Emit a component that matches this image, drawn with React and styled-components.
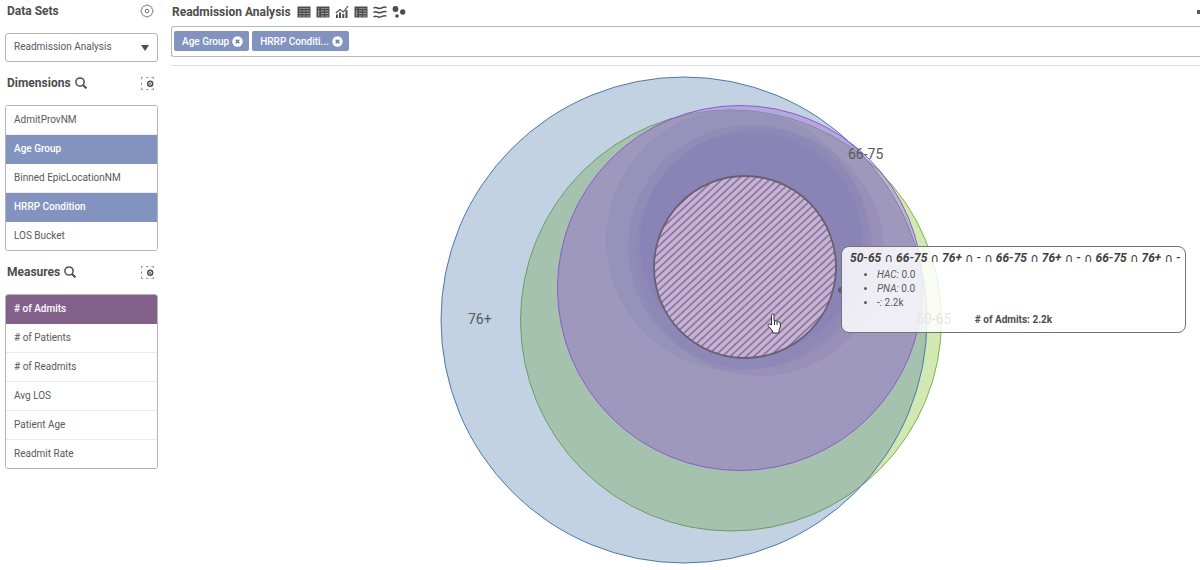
import React, { useState } from "react";
import styled, { createGlobalStyle } from "styled-components";

const GlobalStyle = createGlobalStyle`
  * {
    box-sizing: border-box;
  }

  body {
    margin: 0;
    background: #fff;
    color: #595959;
    font-family: Roboto, "Liberation Sans", sans-serif;
    font-size: 10px;
  }

  button, select {
    font: inherit;
    color: inherit;
  }
`;

const Page = styled.div`
  display: flex;
  overflow: hidden;
`;

const Sidebar = styled.aside`
  flex: 0 0 171px;
  display: flex;
  flex-direction: column;
  gap: 10px;
  padding: 0 13px 0 5px;
`;

const Section = styled.section`
  display: flex;
  flex-direction: column;
  gap: 9px;
`;

const SectionHead = styled.header`
  display: flex;
  align-items: center;
  gap: 4px;
  height: 24px;
  padding: 0 4px 2px 2px;
`;

const Title = styled.h2`
  margin: 0;
  font-size: 12px;
  line-height: 16px;
  font-weight: 700;
  color: #4d4d4d;
  white-space: nowrap;
`;

const IconButton = styled.button`
  display: flex;
  padding: 0;
  margin-left: ${props => (props.$end ? "auto" : "0")};
  border: 0;
  background: none;
  color: #595959;
  cursor: pointer;
`;

const SelectWrap = styled.label`
  display: flex;
  align-items: center;
  height: 29px;
  border: 1px solid #b3b3b3;
  border-radius: 3px;
  padding-right: 8px;
`;

const Select = styled.select`
  flex: 1;
  min-width: 0;
  height: 100%;
  padding: 0 8px 2px;
  border: 0;
  background: none;
  appearance: none;
`;

const List = styled.ul`
  margin: 0;
  padding: 0;
  list-style: none;
  border: 1px solid #b3b3b3;
  border-radius: 3px;
  overflow: hidden;
`;

const Item = styled.li`
  border-bottom: 1px solid ${props => (props.$active ? props.$color : "#ebebeb")};
  background: ${props => (props.$active ? props.$color : "#fff")};
  color: ${props => (props.$active ? "#fff" : "#595959")};
  font-weight: ${props => (props.$active ? 500 : 400)};

  &:last-child {
    border-bottom: 0;
  }
`;

const ItemButton = styled.button`
  display: block;
  width: 100%;
  height: 28px;
  padding: 0 8px 2px;
  border: 0;
  background: none;
  text-align: left;
  cursor: pointer;
`;

const Main = styled.main`
  flex: 1;
  min-width: 0;
`;

const Toolbar = styled.header`
  display: flex;
  align-items: center;
  gap: 6px;
  height: 24px;
  padding-left: 1px;
`;

const ChartTypes = styled.div`
  display: flex;
  align-items: center;
  gap: 5px;
`;

const FilterBar = styled.div`
  display: flex;
  align-items: center;
  gap: 3px;
  height: 31px;
  margin-top: 2px;
  padding: 0 2px 1px;
  border: 1px solid #b8b8b8;
  border-right: 0;
  border-radius: 3px 0 0 3px;
`;

const Chip = styled.span`
  display: flex;
  align-items: center;
  gap: 3px;
  height: 20px;
  padding: 0 6px 0 8px;
  border-radius: 2px;
  background: #8393c0;
  color: #fff;
  font-weight: 500;
  white-space: nowrap;
`;

const Chart = styled.div`
  position: relative;
  margin-top: 8px;
  border-top: 1px solid #dcdcdc;
`;

const Venn = styled.svg`
  display: block;
  width: 100%;
  height: auto;
`;

const SetLabel = styled.text`
  font-family: Roboto, sans-serif;
  font-size: 14px;
  fill: #595959;
`;

const Tooltip = styled.div`
  position: absolute;
  left: 670px;
  top: 180px;
  width: 345px;
  padding: 3px 8px 5px;
  border: 1px solid #737373;
  border-radius: 8px;
  background: rgba(255, 255, 255, 0.84);
  font-variant-numeric: slashed-zero;
`;

const TooltipTitle = styled.div`
  font-size: 12px;
  line-height: 16px;
  font-weight: 700;
  font-style: italic;
  color: #404040;
  white-space: nowrap;
`;

const Cap = styled.span`
  font-family: "DejaVu Sans", sans-serif;
  font-size: 12px;
  line-height: 12px;
  font-weight: 400;
  font-style: normal;
`;

const TooltipList = styled.ul`
  margin: 2px 0 3px;
  padding-left: 27px;
  line-height: 14px;
`;

const TooltipTotal = styled.div`
  text-align: center;
  line-height: 14px;
  font-weight: 700;
  color: #4d4d4d;
`;

const GearIcon = () => (
  <svg width="14" height="14" viewBox="0 0 14 14" fill="none" stroke="#737373">
    <path d="M11.9 9.03A2.4 2.4 0 0 1 9.03 11.9 2.4 2.4 0 0 1 4.97 11.9 2.4 2.4 0 0 1 2.1 9.03 2.4 2.4 0 0 1 2.1 4.97 2.4 2.4 0 0 1 4.97 2.1 2.4 2.4 0 0 1 9.03 2.1 2.4 2.4 0 0 1 11.9 4.97 2.4 2.4 0 0 1 11.9 9.03z" />
    <circle cx="7" cy="7" r="1.8" />
  </svg>
);

const SearchIcon = () => (
  <svg width="12" height="12" viewBox="0 0 12 12" fill="none" stroke="#4d4d4d">
    <circle cx="5" cy="5" r="4.1" strokeWidth="1.5" />
    <path d="M8 8l3.4 3.4" strokeWidth="2" />
  </svg>
);

const ClearIcon = () => (
  <svg width="13" height="13" viewBox="0 0 13 13" fill="none">
    <path
      d="M.5 2.5V.5H2M5 .5h2.5M10.5.5h2V2M.5 5.5V8M.5 10.5v2H2M5 12.5h2.500M10.500 12.5h2V11"
      stroke="#999"
    />
    <circle cx="9.2" cy="6.7" r="2.500" stroke="#4d4d4d" strokeWidth="1.4" />
    <path d="M8.2 5.7l2 2M10.2 5.7l-2 2" stroke="#4d4d4d" />
  </svg>
);

const ArrowIcon = () => (
  <svg width="8" height="6" viewBox="0 0 8 6">
    <path d="M0 0h8L4 6z" fill="#4d4d4d" />
  </svg>
);

const TableIcon = ({ pivot }) => (
  <svg width="14" height="12" viewBox="0 0 14 12">
    <path d="M.5.5h13v11H.5z" fill="#4d4d4d" />
    <path d={pivot ? "M2 2.5h1.5M5 2.5h7.5" : "M2 2.5h10.5"} stroke="#7d8a90" />
    <path
      d={pivot ? "M5 5h7.5M5 7.5h7.5M5 10h7.5M2.7 4v6.5" : "M2 5h10.5M2 7.5h10.5M2 10h10.5"}
      stroke="#a9b4b8"
      strokeWidth="0.9"
    />
    <path d={pivot ? "M8.5 4v7" : "M5 4v7M9 4v7"} stroke="#4d4d4d" />
  </svg>
);

const ComboIcon = () => (
  <svg width="14" height="14" viewBox="0 0 14 14" fill="#4d4d4d">
    <path d="M1 9.5h2V13H1zM4 7.5h2V13H4zM7.3 9h2v4h-2zM10.5 5h2v8h-2z" />
    <path d="M.8 8 5 4.5 8.3 7 13 1" fill="none" stroke="#4d4d4d" strokeWidth="1.2" />
  </svg>
);

const WavesIcon = () => (
  <svg width="14" height="12" viewBox="0 0 14 12" fill="none" stroke="#4d4d4d" strokeWidth="1.5">
    <path d="M.5 2.2C3.500.2 4.500 3 7 2.500S10.500.2 13.500 1.500M.5 6.500C3.500 4.500 4.500 7.300 7 6.800S10.500 4.500 13.500 5.800M.5 10.800C3.500 8.800 4.500 11.600 7 11.100S10.500 8.800 13.500 10.100" />
  </svg>
);

const DotsIcon = () => (
  <svg width="14" height="12" viewBox="0 0 14 12" fill="#4d4d4d">
    <circle cx="3.5" cy="3" r="2.9" />
    <circle cx="10.7" cy="6" r="2.7" />
    <circle cx="5" cy="10" r="1.8" />
  </svg>
);

const MoreIcon = () => (
  <svg width="3" height="4" viewBox="0 0 3 4">
    <path d="M0 0h3v4H0z" fill="#595959" />
  </svg>
);

const CloseIcon = () => (
  <svg width="11" height="11" viewBox="0 0 11 11">
    <circle cx="5.5" cy="5.5" r="5.2" fill="#fff" />
    <path d="M3.7 3.7l3.6 3.6M7.3 3.7 3.7 7.3" stroke="#6b7aa8" strokeWidth="1.5" />
  </svg>
);

const chartTypes = [
  { label: "Table", icon: <TableIcon /> },
  { label: "Pivot table", icon: <TableIcon pivot /> },
  { label: "Combo chart", icon: <ComboIcon /> },
  { label: "Grouped table", icon: <TableIcon pivot /> },
  { label: "Sankey", icon: <WavesIcon /> },
  { label: "Venn diagram", icon: <DotsIcon /> },
];

const dimensions = ["AdmitProvNM", "Age Group", "Binned EpicLocationNM", "HRRP Condition", "LOS Bucket"];
const measures = ["# of Admits", "# of Patients", "# of Readmits", "Avg LOS", "Patient Age", "Readmit Rate"];
const sets = ["50-65", "66-75", "76+", "-", "66-75", "76+", "-", "66-75", "76+", "-"];

const shorten = name => (name.length > 12 ? `${name.slice(0, 12)}...` : name);

const PickList = ({ title, items, initial, color }) => {
  const [picked, setPicked] = useState(initial);

  const toggle = item =>
    setPicked(picked.includes(item) ? picked.filter(p => p !== item) : [...picked, item]);

  return (
    <Section>
      <SectionHead>
        <Title>{title}</Title>
        <IconButton aria-label={`Search ${title}`}>
          <SearchIcon />
        </IconButton>
        <IconButton $end aria-label={`Clear ${title}`}>
          <ClearIcon />
        </IconButton>
      </SectionHead>
      <List>
        {items.map(item => (
          <Item key={item} $active={picked.includes(item)} $color={color}>
            <ItemButton aria-pressed={picked.includes(item)} onClick={() => toggle(item)}>
              {item}
            </ItemButton>
          </Item>
        ))}
      </List>
    </Section>
  );
};

const VennDiagram = () => (
  <Venn viewBox="171 66 1029 504" role="img" aria-label="Admits by age group">
    <defs>
      <pattern id="hatch" width="5.4" height="5.4" patternUnits="userSpaceOnUse" patternTransform="rotate(-43)">
        <path d="M0 2.7h5.4" stroke="#7b688f" strokeWidth="1.4" />
      </pattern>
      <clipPath id="inBlue">
        <circle cx="684" cy="320" r="243" />
      </clipPath>
      <clipPath id="inGreen" clipPath="url(#inBlue)">
        <circle cx="731" cy="320.5" r="210.5" />
      </clipPath>
    </defs>
    <circle cx="731" cy="320.5" r="210.5" fill="#a6d167" fillOpacity="0.5" stroke="#82b04c" />
    <circle cx="684" cy="320" r="243" fill="#4472a6" fillOpacity="0.32" stroke="#4c78ab" />
    <circle cx="740" cy="288" r="182.5" fill="#9254d8" fillOpacity="0.34" />
    <g clipPath="url(#inGreen)">
      <circle cx="740" cy="288" r="182" fill="#9c97bb" fillOpacity="0.8" />
      <circle cx="737" cy="240" r="131" fill="#8588b6" fillOpacity="0.3" />
      <circle cx="760" cy="252" r="124" fill="#9078b0" fillOpacity="0.25" />
      <circle cx="750" cy="247" r="122" fill="#8680b4" fillOpacity="0.35" />
      <circle cx="751" cy="243" r="111" fill="#8078b4" fillOpacity="0.3" />
    </g>
    <circle cx="740" cy="288" r="182.5" fill="none" stroke="#8a5bd0" />
    <circle cx="841" cy="290" r="3" fill="#5f5a78" />
    <circle cx="745" cy="267" r="91" fill="#c8b3d6" />
    <circle cx="745" cy="267" r="91" fill="url(#hatch)" stroke="#67606f" strokeWidth="1.8" />
    <SetLabel x="848" y="159">66-75</SetLabel>
    <SetLabel x="468" y="324">76+</SetLabel>
    <SetLabel x="916" y="324">50-65</SetLabel>
    <path
      d="M771.500 325v-9.500q0-1.500 1.200-1.500t1.300 1.500v5l3.500.8 2.800 1.500v4.200l-1.300 3.500v2.500h-6.300v-2l-4.700-5.500q0-1.800 1.600-1.500z"
      fill="#fff"
      stroke="#333"
    />
    <path d="M774.500 321v4M777 322v3" stroke="#333" />
  </Venn>
);

const App = () => (
  <Page>
    <GlobalStyle />
    <Sidebar>
      <Section>
        <SectionHead>
          <Title>Data Sets</Title>
          <IconButton $end aria-label="Settings">
            <GearIcon />
          </IconButton>
        </SectionHead>
        <SelectWrap>
          <Select aria-label="Data set">
            <option>Readmission Analysis</option>
          </Select>
          <ArrowIcon />
        </SelectWrap>
      </Section>
      <PickList
        title="Dimensions"
        items={dimensions}
        initial={["Age Group", "HRRP Condition"]}
        color="#8393c0"
      />
      <PickList title="Measures" items={measures} initial={["# of Admits"]} color="#84618a" />
    </Sidebar>
    <Main>
      <Toolbar>
        <Title as="h1">Readmission Analysis</Title>
        <ChartTypes>
          {chartTypes.map(type => (
            <IconButton key={type.label} aria-label={type.label}>
              {type.icon}
            </IconButton>
          ))}
        </ChartTypes>
        <IconButton $end aria-label="More">
          <MoreIcon />
        </IconButton>
      </Toolbar>
      <FilterBar>
        {["Age Group", "HRRP Condition"].map(name => (
          <Chip key={name}>
            {shorten(name)}
            <IconButton aria-label={`Remove ${name}`}>
              <CloseIcon />
            </IconButton>
          </Chip>
        ))}
      </FilterBar>
      <Chart>
        <VennDiagram />
        <Tooltip role="tooltip">
          <TooltipTitle>
            {sets.map((set, i) => (
              <React.Fragment key={i}>
                {i > 0 && <> <Cap>∩</Cap> </>}
                {set}
              </React.Fragment>
            ))}
          </TooltipTitle>
          <TooltipList>
            <li><em>HAC:</em> 0.0</li>
            <li><em>PNA:</em> 0.0</li>
            <li><em>-:</em> 2.2k</li>
          </TooltipList>
          <TooltipTotal># of Admits: 2.2k</TooltipTotal>
        </Tooltip>
      </Chart>
    </Main>
  </Page>
);

export default App;
